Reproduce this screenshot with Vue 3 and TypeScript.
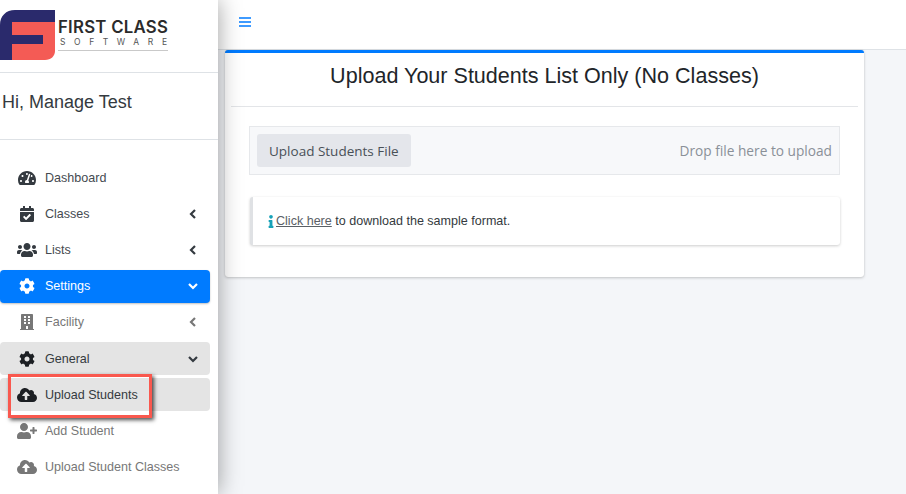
<script setup lang="ts">
interface NavItem {
  label: string
  icon: string
  state?: 'active' | 'open' | 'current' | 'muted' | 'peek'
  arrow?: 'left' | 'down'
}

const icons: Record<string, { box: string; d: string }> = {
  gauge: {
    box: '0 0 576 512',
    d: 'M288 32C128.94 32 0 160.94 0 320c0 52.8 14.25 102.26 39.06 144.8 5.61 9.62 16.3 15.2 27.44 15.2h443c11.14 0 21.83-5.58 27.44-15.2C561.75 422.26 576 372.8 576 320c0-159.06-128.94-288-288-288zm0 64c14.71 0 26.58 10.13 30.32 23.65-1.11 2.26-2.64 4.23-3.45 6.67l-9.22 27.67c-5.13 3.49-10.97 6.01-17.64 6.01-17.67 0-32-14.33-32-32S270.33 96 288 96zM96 384c-17.67 0-32-14.33-32-32s14.33-32 32-32 32 14.33 32 32-14.33 32-32 32zm48-160c-17.67 0-32-14.33-32-32s14.33-32 32-32 32 14.33 32 32-14.33 32-32 32zm246.77-72.41l-61.33 184C343.13 347.33 352 364.54 352 384c0 11.72-3.38 22.55-8.88 32H232.88c-5.5-9.45-8.88-20.28-8.88-32 0-33.94 26.5-61.43 59.9-63.59l61.34-184.01c4.17-12.56 17.73-19.45 30.36-15.17 12.57 4.19 19.35 17.79 15.17 30.36zm14.66 57.2l15.52-46.55c3.47-1.29 7.13-2.23 11.05-2.23 17.67 0 32 14.33 32 32s-14.33 32-32 32c-11.38-.01-20.89-6.28-26.57-15.22zM480 384c-17.67 0-32-14.33-32-32s14.33-32 32-32 32 14.33 32 32-14.33 32-32 32z'
  },
  calendar: {
    box: '0 0 448 512',
    d: 'M436 160H12c-6.627 0-12-5.373-12-12v-36c0-26.51 21.49-48 48-48h48V12c0-6.627 5.373-12 12-12h40c6.627 0 12 5.373 12 12v52h128V12c0-6.627 5.373-12 12-12h40c6.627 0 12 5.373 12 12v52h48c26.51 0 48 21.49 48 48v36c0 6.627-5.373 12-12 12zM12 192h424c6.627 0 12 5.373 12 12v260c0 26.51-21.49 48-48 48H48c-26.51 0-48-21.49-48-48V204c0-6.627 5.373-12 12-12zm333.296 95.947l-28.169-28.398c-4.667-4.705-12.265-4.736-16.97-.068L194.12 364.665l-45.98-46.352c-4.667-4.705-12.265-4.736-16.97-.068l-28.397 28.17c-4.705 4.667-4.736 12.265-.068 16.97l82.601 83.269c4.667 4.705 12.265 4.736 16.97.068l142.953-141.805c4.705-4.667 4.736-12.265.067-16.97z'
  },
  users: {
    box: '0 0 640 512',
    d: 'M96 224c35.3 0 64-28.7 64-64s-28.7-64-64-64-64 28.7-64 64 28.7 64 64 64zm448 0c35.3 0 64-28.7 64-64s-28.7-64-64-64-64 28.7-64 64 28.7 64 64 64zm32 32h-64c-17.6 0-33.5 7.1-45.1 18.6 40.3 22.1 68.9 62 75.1 109.4h66c17.7 0 32-14.3 32-32v-32c0-35.3-28.7-64-64-64zm-256 0c61.9 0 112-50.1 112-112S381.9 32 320 32 208 82.1 208 144s50.1 112 112 112zm76.8 32h-8.3c-20.8 10-43.9 16-68.5 16s-47.6-6-68.5-16h-8.3C179.6 288 128 339.6 128 403.2V432c0 26.5 21.5 48 48 48h288c26.5 0 48-21.5 48-48v-28.8c0-63.6-51.6-115.2-115.2-115.2zm-223.7-13.4C161.5 263.1 145.6 256 128 256H64c-35.3 0-64 28.7-64 64v32c0 17.7 14.3 32 32 32h65.9c6.3-47.4 34.9-87.3 75.2-109.4z'
  },
  cog: {
    box: '0 0 512 512',
    d: 'M487.4 315.7l-42.6-24.6c4.3-23.2 4.3-47 0-70.2l42.6-24.6c4.9-2.8 7.1-8.6 5.5-14-11.1-35.6-30-67.8-54.7-94.6-3.8-4.1-10-5.1-14.8-2.3L380.8 110c-17.9-15.4-38.5-27.3-60.8-35.1V25.8c0-5.6-3.9-10.5-9.4-11.7-36.7-8.2-74.3-7.8-109.2 0-5.5 1.2-9.4 6.1-9.4 11.7V75c-22.2 7.9-42.8 19.8-60.8 35.1L88.7 85.5c-4.9-2.8-11-1.9-14.8 2.3-24.7 26.7-43.6 58.9-54.7 94.6-1.7 5.4.6 11.2 5.5 14L67.3 221c-4.3 23.2-4.3 47 0 70.2l-42.6 24.6c-4.9 2.8-7.1 8.6-5.5 14 11.1 35.6 30 67.8 54.7 94.6 3.8 4.1 10 5.1 14.8 2.3l42.6-24.6c17.9 15.4 38.5 27.3 60.8 35.1v49.2c0 5.6 3.9 10.5 9.4 11.7 36.7 8.2 74.3 7.8 109.2 0 5.5-1.2 9.4-6.1 9.4-11.7v-49.2c22.2-7.9 42.8-19.8 60.8-35.1l42.6 24.6c4.9 2.8 11 1.9 14.8-2.3 24.7-26.7 43.6-58.9 54.7-94.6 1.5-5.5-.7-11.3-5.6-14.1zM256 336c-44.1 0-80-35.9-80-80s35.9-80 80-80 80 35.9 80 80-35.9 80-80 80z'
  },
  building: {
    box: '0 0 448 512',
    d: 'M436 480h-20V24c0-13.255-10.745-24-24-24H56C42.745 0 32 10.745 32 24v456H12c-6.627 0-12 5.373-12 12v20h448v-20c0-6.627-5.373-12-12-12zM128 76c0-6.627 5.373-12 12-12h40c6.627 0 12 5.373 12 12v40c0 6.627-5.373 12-12 12h-40c-6.627 0-12-5.373-12-12V76zm0 96c0-6.627 5.373-12 12-12h40c6.627 0 12 5.373 12 12v40c0 6.627-5.373 12-12 12h-40c-6.627 0-12-5.373-12-12v-40zm52 148h-40c-6.627 0-12-5.373-12-12v-40c0-6.627 5.373-12 12-12h40c6.627 0 12 5.373 12 12v40c0 6.627-5.373 12-12 12zm76 160h-64v-84c0-6.627 5.373-12 12-12h40c6.627 0 12 5.373 12 12v84zm64-172c0 6.627-5.373 12-12 12h-40c-6.627 0-12-5.373-12-12v-40c0-6.627 5.373-12 12-12h40c6.627 0 12 5.373 12 12v40zm0-96c0 6.627-5.373 12-12 12h-40c-6.627 0-12-5.373-12-12v-40c0-6.627 5.373-12 12-12h40c6.627 0 12 5.373 12 12v40zm0-96c0 6.627-5.373 12-12 12h-40c-6.627 0-12-5.373-12-12V76c0-6.627 5.373-12 12-12h40c6.627 0 12 5.373 12 12v40z'
  },
  upload: {
    box: '0 0 640 512',
    d: 'M537.6 226.6c4.1-10.7 6.4-22.4 6.4-34.6 0-53-43-96-96-96-19.7 0-38.1 6-53.3 16.2C367 64.2 315.3 32 256 32c-88.4 0-160 71.6-160 160 0 2.7.1 5.4.2 8.1C40.2 219.8 0 273.2 0 336c0 79.5 64.5 144 144 144h368c70.7 0 128-57.3 128-128 0-61.9-44-113.6-102.4-125.4zM393.4 288H328v112c0 8.8-7.2 16-16 16h-48c-8.8 0-16-7.2-16-16V288h-65.4c-14.3 0-21.4-17.2-11.3-27.3l105.4-105.4c6.2-6.2 16.4-6.2 22.6 0l105.4 105.4c10.1 10.1 2.9 27.3-11.3 27.3z'
  },
  userPlus: {
    box: '0 0 640 512',
    d: 'M624 208h-64v-64c0-8.8-7.2-16-16-16h-32c-8.8 0-16 7.2-16 16v64h-64c-8.8 0-16 7.2-16 16v32c0 8.8 7.2 16 16 16h64v64c0 8.8 7.2 16 16 16h32c8.8 0 16-7.2 16-16v-64h64c8.8 0 16-7.2 16-16v-32c0-8.8-7.2-16-16-16zm-400 48c70.7 0 128-57.3 128-128S294.7 0 224 0 96 57.3 96 128s57.3 128 128 128zm89.6 32h-16.7c-22.2 10.2-46.9 16-72.9 16s-50.6-5.8-72.9-16h-16.7C60.2 288 0 348.2 0 422.4V464c0 26.5 21.5 48 48 48h352c26.5 0 48-21.5 48-48v-41.6c0-74.2-60.2-134.4-134.4-134.4z'
  }
}

const navItems: NavItem[] = [
  { label: 'Dashboard', icon: 'gauge' },
  { label: 'Classes', icon: 'calendar', arrow: 'left' },
  { label: 'Lists', icon: 'users', arrow: 'left' },
  { label: 'Settings', icon: 'cog', arrow: 'down', state: 'active' },
  { label: 'Facility', icon: 'building', arrow: 'left', state: 'muted' },
  { label: 'General', icon: 'cog', arrow: 'down', state: 'open' },
  { label: 'Upload Students', icon: 'upload', state: 'current' },
  { label: 'Add Student', icon: 'userPlus', state: 'muted' },
  { label: 'Upload Student Classes', icon: 'upload', state: 'muted' },
  // only the top of this row's icon shows above the fold
  { label: '', icon: 'users', state: 'peek' }
]

const infoPath = 'M20 424.229h20V279.771H20c-11.046 0-20-8.954-20-20V212c0-11.046 8.954-20 20-20h112c11.046 0 20 8.954 20 20v212.229h20c11.046 0 20 8.954 20 20V492c0 11.046-8.954 20-20 20H20c-11.046 0-20-8.954-20-20v-47.771c0-11.046 8.954-20 20-20zM96 0C56.235 0 24 32.235 24 72s32.235 72 72 72 72-32.235 72-72S135.764 0 96 0z'
</script>

<template>
  <div class="page">
    <aside class="sidebar">
      <div class="brand">
        <svg class="brand-mark" viewBox="0 0 55 50">
          <path d="M0 50V15C0 6 6 0 15 0H55V12H12V25H43V34H12V50Z" fill="#2a2a6c" />
          <path d="M12 12H55V41C55 46 51 50 45 50H12V34H43V25H12Z" fill="#f45b55" />
        </svg>
        <div class="brand-text">
          <span class="brand-name">FIRST CLASS</span>
          <span class="brand-sub">SOFTWARE</span>
        </div>
      </div>

      <div class="user-panel">Hi, Manage Test</div>

      <nav class="nav">
        <a
          v-for="item in navItems"
          :key="item.icon + item.label"
          class="nav-link"
          :class="item.state"
        >
          <span class="nav-icon">
            <svg :viewBox="icons[item.icon].box" class="nav-svg">
              <path :d="icons[item.icon].d" fill="currentColor" />
            </svg>
          </span>
          <span class="nav-label">{{ item.label }}</span>
          <svg v-if="item.arrow" class="arrow" viewBox="0 0 10 10">
            <polyline
              :points="item.arrow === 'left' ? '7,1 3,5 7,9' : '1,3 5,7 9,3'"
              fill="none"
              stroke="currentColor"
              stroke-width="2.2"
            />
          </svg>
        </a>
      </nav>

      <div class="callout-box"></div>
    </aside>

    <div class="main">
      <header class="topbar">
        <svg class="burger" viewBox="0 0 12 10">
          <path d="M0 1H12M0 5H12M0 9H12" stroke="#007bff" stroke-width="1.3" fill="none" />
        </svg>
      </header>

      <section class="card">
        <h1 class="card-title">Upload Your Students List Only (No Classes)</h1>
        <div class="card-body">
          <div class="dropzone">
            <button class="upload-btn" type="button">Upload Students File</button>
            <span class="drop-hint">Drop file here to upload</span>
          </div>
          <div class="callout">
            <svg class="info-icon" viewBox="0 0 192 512">
              <path :d="infoPath" fill="#17a2b8" />
            </svg>
            <a class="sample-link">Click here</a> to download the sample format.
          </div>
        </div>
      </section>
    </div>
  </div>
</template>

<style>
html,
body {
  margin: 0;
  overflow: hidden;
}
</style>

<style scoped>
.page {
  position: relative;
  display: flex;
  width: 906px;
  height: 494px;
  overflow: hidden;
  background: #f4f6f9;
  font-family: "Liberation Sans", Arial, sans-serif;
  color: #212529;
}

.sidebar {
  position: relative;
  flex: 0 0 218px;
  height: 494px;
  overflow: hidden;
  background: #fff;
  z-index: 2;
}

/* the shadow has to fall over the card, and .sidebar clips its own children */
.page::before {
  content: "";
  position: absolute;
  left: 0;
  top: 0;
  width: 218px;
  height: 494px;
  box-shadow: 0 0 22px rgba(0, 0, 0, 0.38);
  z-index: 1;
}

.brand {
  display: flex;
  align-items: flex-start;
  height: 73px;
  padding-top: 10px;
  box-sizing: border-box;
  border-bottom: 1px solid #dee2e6;
}

.brand-mark {
  width: 55px;
  height: 50px;
  flex: none;
}

.brand-text {
  display: flex;
  flex-direction: column;
  margin: 9px 0 0 3px;
  width: 110px;
}

.brand-name {
  font-family: Inter, "Open Sans", sans-serif;
  font-weight: 600;
  font-size: 16.8px;
  line-height: 16px;
  letter-spacing: 0.25px;
  color: #2b2b2b;
  white-space: nowrap;
}

.brand-sub {
  font-family: Inter, "Open Sans", sans-serif;
  font-size: 8.5px;
  line-height: 10px;
  letter-spacing: 8.6px;
  padding: 2px 0 3px 2px;
  color: #555;
  border-bottom: 1px solid #c9c9c9;
  white-space: nowrap;
}

.user-panel {
  height: 67px;
  box-sizing: border-box;
  padding: 18px 0 0 2px;
  font-size: 18px;
  line-height: 22px;
  color: #343a40;
  border-bottom: 1px solid #dee2e6;
}

.nav {
  display: flex;
  flex-direction: column;
  gap: 3px;
  padding: 21px 8px 0 0;
}

.nav-link {
  display: flex;
  align-items: center;
  flex: none;
  height: 33.2px;
  padding-left: 17px;
  padding-right: 12px;
  border-radius: 4px;
  font-size: 12.55px;
  color: #454a50;
}

.nav-icon {
  display: flex;
  justify-content: center;
  width: 20px;
  margin-right: 8px;
  color: #343a40;
}

.nav-svg {
  height: 16px;
  width: 20px;
}

.nav-label {
  flex: 1;
  white-space: nowrap;
}

.arrow {
  width: 10px;
  height: 10px;
  color: #343a40;
}

.nav-link.active {
  background: #007bff;
  color: #fff;
  box-shadow: 0 1px 2px rgba(0, 0, 0, 0.25);
}

.nav-link.active .nav-icon,
.nav-link.active .arrow {
  color: #fff;
}

.nav-link.open,
.nav-link.current {
  background: #e4e4e4;
  color: #343a40;
}

.nav-link.open .nav-icon,
.nav-link.current .nav-icon {
  color: #1c1f23;
}

.nav-link.muted,
.nav-link.muted .nav-icon,
.nav-link.muted .arrow {
  color: #777;
}

.nav-link.peek .nav-icon {
  color: #777;
}

.nav-link.peek .nav-svg {
  height: 24px;
}

.callout-box {
  position: absolute;
  left: 8px;
  top: 374px;
  width: 144px;
  height: 44px;
  box-sizing: border-box;
  border: 3.5px solid #f9584e;
  box-shadow: 2px 2px 4px rgba(0, 0, 0, 0.7);
}

.main {
  flex: 1;
  min-width: 0;
}

.topbar {
  display: flex;
  align-items: center;
  height: 50px;
  box-sizing: border-box;
  padding: 0 0 6px 21px;
  background: #fff;
  border-bottom: 1px solid #dee2e6;
}

.burger {
  width: 12px;
  height: 10px;
}

.card {
  width: 639px;
  height: 227px;
  box-sizing: border-box;
  margin: 0 0 0 7px;
  padding: 0 6px;
  background: #fff;
  border-top: 3px solid #007bff;
  border-radius: 3px;
  box-shadow: 0 0 1px rgba(0, 0, 0, 0.13), 0 1px 3px rgba(0, 0, 0, 0.2);
}

.card-title {
  margin: 0;
  height: 54px;
  box-sizing: border-box;
  padding-top: 10px;
  border-bottom: 1px solid #e3e5e8;
  font-size: 21.55px;
  line-height: 26px;
  font-weight: 400;
  text-align: center;
  color: #212529;
}

.card-body {
  padding: 19px 18px 0;
}

.dropzone {
  display: flex;
  align-items: center;
  justify-content: space-between;
  height: 49px;
  box-sizing: border-box;
  padding: 0 7px;
  background: #f7f8fa;
  border: 1px solid #e6e8eb;
  font-family: "Open Sans", sans-serif;
}

.upload-btn {
  height: 33px;
  padding: 0 12px;
  border: none;
  border-radius: 3px;
  background: #e4e6eb;
  font-family: "Open Sans", sans-serif;
  font-size: 13.5px;
  color: #495057;
}

.drop-hint {
  font-size: 13.7px;
  color: #8a9098;
}

.callout {
  display: flex;
  align-items: center;
  height: 48px;
  box-sizing: border-box;
  margin: 22px 0 0 1px;
  padding: 0 15px;
  background: #fff;
  border-left: 3px solid #dfe1e4;
  border-radius: 3px;
  box-shadow: 0 1px 3px rgba(0, 0, 0, 0.2);
  font-size: 12.55px;
  color: #343a40;
  white-space: pre;
}

.info-icon {
  width: 6px;
  height: 13px;
  margin-right: 2px;
}

.sample-link {
  color: #5a6066;
  text-decoration: underline;
}
</style>
